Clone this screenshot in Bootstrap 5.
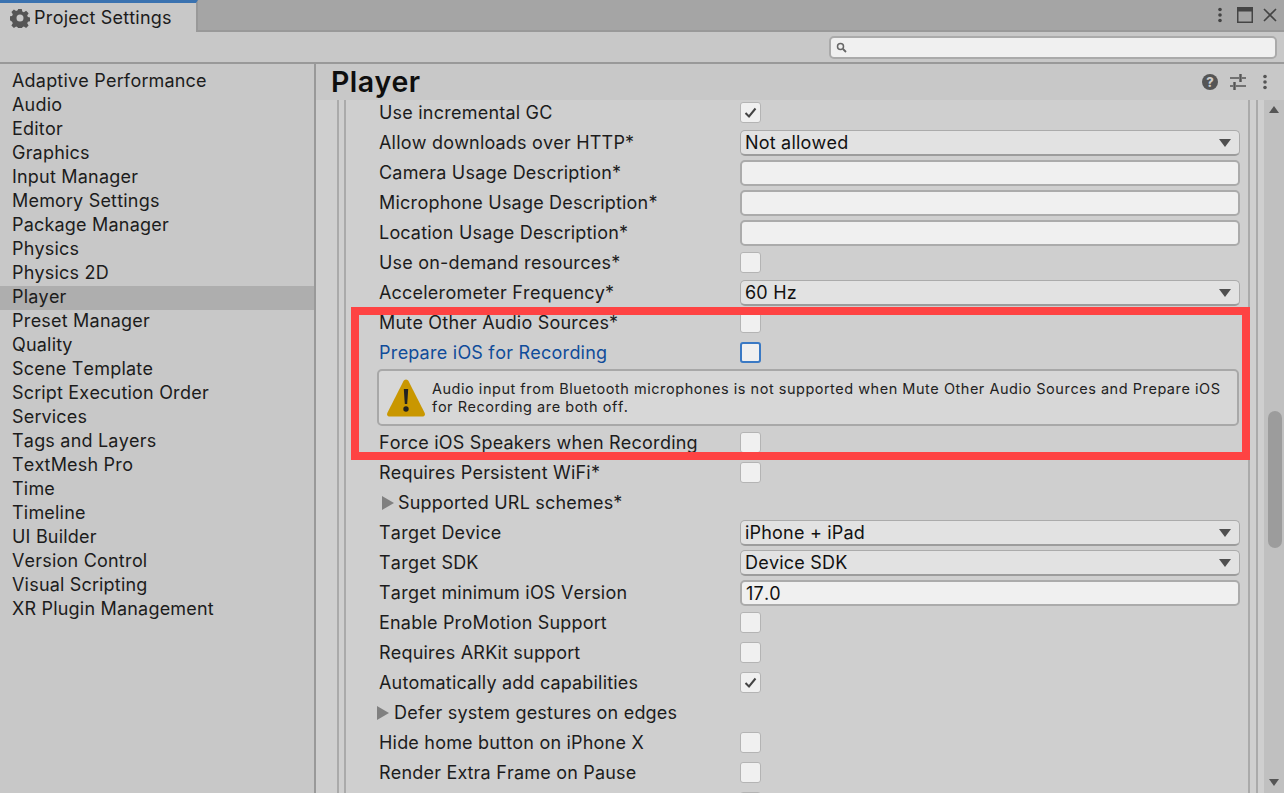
<!DOCTYPE html>
<html lang="en">
<head>
<meta charset="utf-8">
<title>Project Settings</title>
<link href="https://cdn.jsdelivr.net/npm/bootstrap@5.3.0/dist/css/bootstrap.min.css" rel="stylesheet">
<style>
html,body{height:793px;overflow:hidden}
body{font-family:Inter,"Liberation Sans",sans-serif;font-size:18px;color:#1c1c1c;background:#c8c8c8;letter-spacing:.2px;font-kerning:none;position:relative}
.tabbar{height:32px;background:#a5a5a5;border-bottom:2px solid #999}
.wintab{width:198px;height:32px;background:#c8c8c8;border-top:3px solid #3a72b0;border-right:2px solid #999;padding-left:10px;gap:4px;line-height:26px;padding-top:1px}
.winicons{gap:10px;padding-right:7px;height:30px}
.toolbar{height:32px;border-bottom:2px solid #999;padding-right:7px;padding-top:1px}
.searchbox{width:448px;height:23px;background:#f0f0f0;border:2px solid #aaa;border-radius:5px;padding-left:5px}
.mainarea{height:729px}
.sidelist{width:316px;border-right:2px solid #999;padding-top:6px;flex:none}
.sideitem{height:24px;line-height:21px;padding-left:12px;white-space:nowrap}
.sideitem.sel{background:#aeaeae}
.rightpane{min-width:0}
.headbar{height:36px;background:#c8c8c8;padding:0 16px 0 15px}
.headtitle{font-size:28.5px;font-weight:600;line-height:36px;color:#0e0e0e;letter-spacing:.4px}
.headicons{gap:12px}
.scrollarea{height:693px;overflow:hidden;background:#cfcfcf}
.guide{flex:none;border-left:2px solid #aaa}
.guide-a{width:7px;margin-left:21px}
.guide-b{width:35px}
.guide-c{width:8px}
.guide-d{width:8px}
.rowsbox{width:869px;flex:none;margin-top:-2px}
.setrow{height:30px;line-height:30px;white-space:nowrap}
.lbl{width:361px;flex:none}
.lbl.blue{color:#0f4c9a}
.ctrl{width:500px;flex:none}
.chk{display:block;width:21px;height:21px;margin-bottom:1px;background:#f0f0f0;border:1px solid #b4b4b4;border-radius:3px}
.chk.focus{border:2px solid #3a79c4}
.field{height:26px;line-height:23px;background:#f0f0f0;border:2px solid #ababab;border-radius:5px;padding-left:4px;color:#111}
.drop{height:26px;line-height:23px;background:#e2e2e2;border:1px solid #ababab;border-bottom:2px solid #9c9c9c;border-radius:5px;padding:0 8px 0 4px;color:#111}
.tri{color:#555;font-size:0;width:0;height:0;border-left:6px solid transparent;border-right:6px solid transparent;border-top:8px solid #4f4f4f}
.fold{width:0;height:0;border-top:7px solid transparent;border-bottom:7px solid transparent;border-left:12px solid #808080;margin-left:3px;margin-right:4px}
.fold.tight{margin-left:-2px;margin-right:5px}
.helpbox{height:57px;margin:1px 0 2px -2px;width:862px;background:#d7d7d7;border:2px solid #a8a8a8;border-radius:5px;padding:1px 8px 0 7px;gap:6px;font-size:14.5px;line-height:18px;letter-spacing:.52px;color:#222;flex:none}
.sbar{width:20px;flex:none;background:#c0c0c0;position:relative}
.sthumb{position:absolute;left:4px;top:311px;width:14px;height:137px;background:#9c9c9c;border-radius:7px}
.sup,.sdn{position:absolute;left:5px;width:0;height:0;border-left:5px solid transparent;border-right:5px solid transparent}
.sup{top:6px;border-bottom:7px solid #555}
.sdn{bottom:7px;border-top:7px solid #555}
.redframe{position:absolute;left:351px;top:307px;width:899px;height:153px;border:8px solid #fe4343;pointer-events:none}
</style>
</head>
<body>
<div class="tabbar d-flex justify-content-between">
  <div class="wintab d-flex align-items-center">
    <svg width="20" height="20" viewBox="0 0 20 20"><path fill="#555" fill-rule="evenodd" d="M8.2 1h3.6l.5 2.500 1.600.7 2.200-1.400 2.500 2.500-1.400 2.200.7 1.600 2.500.5v3.600l-2.500.5-.7 1.600 1.400 2.200-2.500 2.500-2.200-1.400-1.600.7-.5 2.500H8.200l-.5-2.500-1.600-.7-2.200 1.400-2.500-2.500 1.400-2.200-.7-1.600L-.4 12V8.400l2.500-.5.7-1.600-1.400-2.200 2.500-2.500 2.200 1.400 1.600-.7zM10 6.600a3.500 3.500 0 1 0 0 7 3.500 3.500 0 0 0 0-7z"/></svg>
    <span>Project Settings</span>
  </div>
  <div class="winicons d-flex align-items-center">
    <svg width="6" height="16" viewBox="0 0 6 16"><circle cx="3" cy="2.500" r="1.800" fill="#444"/><circle cx="3" cy="8" r="1.800" fill="#444"/><circle cx="3" cy="13.500" r="1.800" fill="#444"/></svg>
    <svg width="16" height="16" viewBox="0 0 16 16" class="ms-1"><rect x=".75" y=".75" width="14.500" height="14.500" fill="none" stroke="#444" stroke-width="1.500"/><rect x="0" y="0" width="16" height="4.500" fill="#444"/></svg>
    <svg width="14" height="14" viewBox="0 0 14 14"><path d="M1 1l12 12M13 1L1 13" stroke="#444" stroke-width="1.600"/></svg>
  </div>
</div>
<div class="toolbar d-flex justify-content-end align-items-center">
  <div class="searchbox d-flex align-items-center"><svg width="11" height="11" viewBox="0 0 11 11"><circle cx="4.500" cy="4.500" r="3" fill="none" stroke="#666" stroke-width="1.500"/><path d="M7 7l3 3" stroke="#666" stroke-width="1.800"/></svg></div>
</div>
<div class="mainarea d-flex">
  <div class="sidelist">
    <div class="sideitem">Adaptive Performance</div>
    <div class="sideitem">Audio</div>
    <div class="sideitem">Editor</div>
    <div class="sideitem">Graphics</div>
    <div class="sideitem">Input Manager</div>
    <div class="sideitem">Memory Settings</div>
    <div class="sideitem">Package Manager</div>
    <div class="sideitem">Physics</div>
    <div class="sideitem">Physics 2D</div>
    <div class="sideitem sel">Player</div>
    <div class="sideitem">Preset Manager</div>
    <div class="sideitem">Quality</div>
    <div class="sideitem">Scene Template</div>
    <div class="sideitem">Script Execution Order</div>
    <div class="sideitem">Services</div>
    <div class="sideitem">Tags and Layers</div>
    <div class="sideitem">TextMesh Pro</div>
    <div class="sideitem">Time</div>
    <div class="sideitem">Timeline</div>
    <div class="sideitem">UI Builder</div>
    <div class="sideitem">Version Control</div>
    <div class="sideitem">Visual Scripting</div>
    <div class="sideitem">XR Plugin Management</div>
  </div>
  <div class="rightpane flex-grow-1">
    <div class="headbar d-flex justify-content-between align-items-center">
      <div class="headtitle">Player</div>
      <div class="headicons d-flex align-items-center">
        <svg width="16" height="16" viewBox="0 0 16 16"><circle cx="8" cy="8" r="8" fill="#555"/><text x="8" y="12.500" text-anchor="middle" font-family="Inter" font-size="13" font-weight="800" fill="#ccc">?</text></svg>
        <svg width="16" height="16" viewBox="0 0 16 16"><path d="M0 4h9M12 4h4M0 12h3M6 12h10" stroke="#555" stroke-width="1.500"/><path d="M10.500 0v8M4.500 8v8" stroke="#555" stroke-width="2.400"/></svg>
        <svg width="6" height="16" viewBox="0 0 6 16" class="ms-1"><circle cx="3" cy="2.500" r="1.800" fill="#555"/><circle cx="3" cy="8" r="1.800" fill="#555"/><circle cx="3" cy="13.500" r="1.800" fill="#555"/></svg>
      </div>
    </div>
    <div class="scrollarea d-flex">
      <div class="guide guide-a"></div>
      <div class="guide guide-b"></div>
      <div class="rowsbox">
        <div class="setrow d-flex align-items-center"><div class="lbl">Use incremental GC</div><div class="ctrl"><span class="chk d-flex align-items-center justify-content-center"><svg width="13" height="11" viewBox="0 0 13 11"><path d="M1.500 6l3.500 3.500L11.500 1.500" fill="none" stroke="#444" stroke-width="2"/></svg></span></div></div>
        <div class="setrow d-flex align-items-center"><div class="lbl">Allow downloads over HTTP*</div><div class="ctrl drop d-flex justify-content-between align-items-center"><span>Not allowed</span><i class="tri"></i></div></div>
        <div class="setrow d-flex align-items-center"><div class="lbl">Camera Usage Description*</div><div class="ctrl field"></div></div>
        <div class="setrow d-flex align-items-center"><div class="lbl">Microphone Usage Description*</div><div class="ctrl field"></div></div>
        <div class="setrow d-flex align-items-center"><div class="lbl">Location Usage Description*</div><div class="ctrl field"></div></div>
        <div class="setrow d-flex align-items-center"><div class="lbl">Use on-demand resources*</div><div class="ctrl"><span class="chk"></span></div></div>
        <div class="setrow d-flex align-items-center"><div class="lbl">Accelerometer Frequency*</div><div class="ctrl drop d-flex justify-content-between align-items-center"><span>60 Hz</span><i class="tri"></i></div></div>
        <div class="setrow d-flex align-items-center"><div class="lbl">Mute Other Audio Sources*</div><div class="ctrl"><span class="chk"></span></div></div>
        <div class="setrow d-flex align-items-center"><div class="lbl blue">Prepare iOS for Recording</div><div class="ctrl"><span class="chk focus"></span></div></div>
        <div class="helpbox d-flex align-items-center">
          <svg width="40" height="40" viewBox="0 0 40 40" class="flex-shrink-0"><path d="M20 1.500c1.200 0 2 .7 2.600 1.800L38.700 35c.8 1.600 0 3.500-2 3.500H3.300c-2 0-2.800-1.900-2-3.500L17.400 3.300C18 2.200 18.800 1.500 20 1.500z" fill="#c99700"/><path d="M17.800 11h4.400l-1 15h-2.400z" fill="#222"/><circle cx="20" cy="31" r="2.700" fill="#222"/></svg>
          <div>Audio input from Bluetooth microphones is not supported when Mute Other Audio Sources and Prepare iOS for Recording are both off.</div>
        </div>
        <div class="setrow d-flex align-items-center"><div class="lbl">Force iOS Speakers when Recording</div><div class="ctrl"><span class="chk"></span></div></div>
        <div class="setrow d-flex align-items-center"><div class="lbl">Requires Persistent WiFi*</div><div class="ctrl"><span class="chk"></span></div></div>
        <div class="setrow d-flex align-items-center"><div class="lbl d-flex align-items-center"><i class="fold"></i>Supported URL schemes*</div></div>
        <div class="setrow d-flex align-items-center"><div class="lbl">Target Device</div><div class="ctrl drop d-flex justify-content-between align-items-center"><span>iPhone + iPad</span><i class="tri"></i></div></div>
        <div class="setrow d-flex align-items-center"><div class="lbl">Target SDK</div><div class="ctrl drop d-flex justify-content-between align-items-center"><span>Device SDK</span><i class="tri"></i></div></div>
        <div class="setrow d-flex align-items-center"><div class="lbl">Target minimum iOS Version</div><div class="ctrl field">17.0</div></div>
        <div class="setrow d-flex align-items-center"><div class="lbl">Enable ProMotion Support</div><div class="ctrl"><span class="chk"></span></div></div>
        <div class="setrow d-flex align-items-center"><div class="lbl">Requires ARKit support</div><div class="ctrl"><span class="chk"></span></div></div>
        <div class="setrow d-flex align-items-center"><div class="lbl">Automatically add capabilities</div><div class="ctrl"><span class="chk d-flex align-items-center justify-content-center"><svg width="13" height="11" viewBox="0 0 13 11"><path d="M1.500 6l3.500 3.500L11.500 1.500" fill="none" stroke="#444" stroke-width="2"/></svg></span></div></div>
        <div class="setrow d-flex align-items-center"><div class="lbl d-flex align-items-center"><i class="fold tight"></i>Defer system gestures on edges</div></div>
        <div class="setrow d-flex align-items-center"><div class="lbl">Hide home button on iPhone X</div><div class="ctrl"><span class="chk"></span></div></div>
        <div class="setrow d-flex align-items-center"><div class="lbl">Render Extra Frame on Pause</div><div class="ctrl"><span class="chk"></span></div></div>
        <div class="setrow d-flex align-items-center"><div class="lbl"></div><div class="ctrl"><span class="chk"></span></div></div>
      </div>
      <div class="guide guide-c"></div>
      <div class="guide guide-d"></div>
      <div class="sbar"><div class="sup"></div><div class="sthumb"></div><div class="sdn"></div></div>
    </div>
  </div>
</div>
<div class="redframe"></div>
<script src="https://cdn.jsdelivr.net/npm/bootstrap@5.3.0/dist/js/bootstrap.bundle.min.js"></script>
</body>
</html>
